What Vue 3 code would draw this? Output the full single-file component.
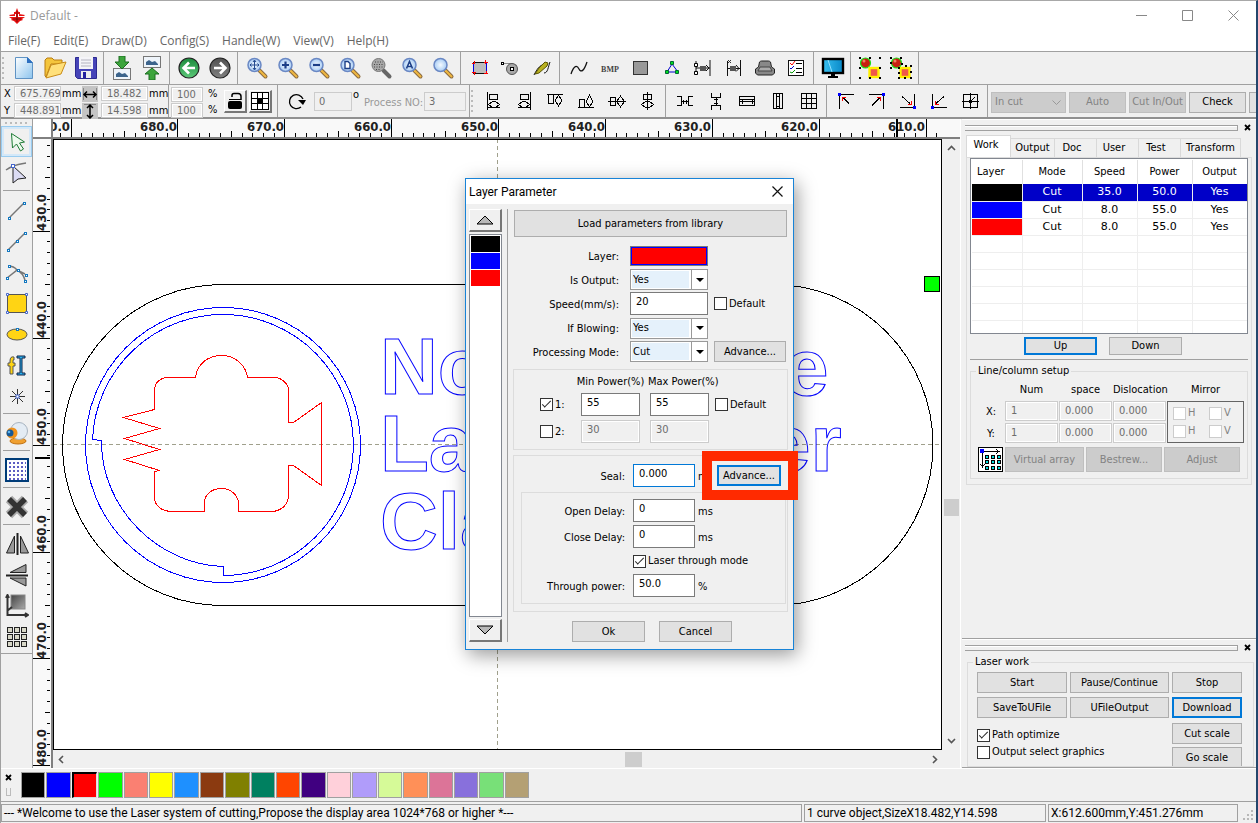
<script setup>
import { ref } from 'vue'

const menus = ['File(F)', 'Edit(E)', 'Draw(D)', 'Config(S)', 'Handle(W)', 'View(V)', 'Help(H)']

const lens = (inner) => `
  <path d="M14.5 14.5l6 6" stroke="#8a6a40" stroke-width="4" stroke-linecap="round"/>
  <path d="M14.5 14.5l6 6" stroke="#f0b840" stroke-width="2" stroke-linecap="round"/>
  <circle cx="9.5" cy="9" r="6.5" fill="url(#glass)" stroke="#6a88c4" stroke-width="1.5"/>${inner}`

const disc = (fill, arrow) => `
  <circle cx="12" cy="12" r="10" fill="url(#${fill})" stroke="#222" stroke-width="1.2"/>
  <path d="${arrow}" stroke="#fff" stroke-width="2.6" fill="none"/>`

const photo = (y) => `
  <rect x="3.5" y="${y + 0.5}" width="17" height="11" fill="#eef4fa" stroke="#777"/>
  <path d="M6 ${y + 9}v-3l3-2 3 2 3-1 3 3v1z" fill="#3c648c"/>`

const shapesPair = (dots) => `
  <path d="M11 11h10v11H11z" fill="#ccc"/>
  <circle cx="7.5" cy="7" r="5" fill="#c81e10" stroke="#18e018" stroke-width="1.2"/>
  <circle cx="6" cy="5" r="1.5" fill="#f08060"/>
  <rect x="11.5" y="12" width="9" height="9" fill="#f05848" stroke="#fff000" stroke-width="2.4"/>
  <path d="${dots}" fill="#000"/>`

const mainTools = [
  [
    { name: 'New', art: '<path d="M3.5 1.5h12l5 5v16h-17z" fill="url(#page)" stroke="#5f93c4"/><path d="M15 1v6h6z" fill="#2c6fc0"/>' },
    { name: 'Open', art: '<path d="M2 20V4l2-2h5l2 2h8v4H8L3 21z" fill="#f4c53c" stroke="#b87c10"/><path d="M3 22L8 9l15-3-5 12z" fill="#ffe07a" stroke="#c98c18"/>' },
    { name: 'Save', art: '<path d="M1.500 1.500h21v21h-19l-2-2z" fill="#4644b8" stroke="#2c2a90"/><rect x="5" y="1" width="14" height="12" fill="#f4f4f8"/><path d="M7 4h10M7 7h10M7 10h10" stroke="#b4b4c0"/><rect x="7" y="15" width="10" height="7" fill="#eee"/><rect x="9" y="16" width="3" height="6" fill="#2220a0"/>' },
  ],
  [
    { name: 'Import', art: photo(12) + '<path d="M9 0h6v6h4l-7 7-7-7h4z" fill="#3da53c" stroke="#1c6e20"/>' },
    { name: 'Export', art: photo(0) + '<path d="M9 24h6v-6h4l-7-6-7 6h4z" fill="#3da53c" stroke="#1c6e20"/>' },
  ],
  [
    { name: 'Undo', art: disc('green', 'M18 12H7M12 6.500L6.500 12l5.500 5.500') },
    { name: 'Redo', art: disc('grey', 'M6 12h11M12 6.500l5.500 5.500-5.500 5.500') },
  ],
  [
    { name: 'Move view', art: lens('<path d="M9.500 4.500v9M5 9h9M8 6l1.500-2L11 6M8 12l1.500 2 1.500-2M6.500 7.500L5 9l1.500 1.500M12.500 7.500L14 9l-1.500 1.500" stroke="#224a90" fill="none"/>') },
    { name: 'Zoom in', art: lens('<path d="M9.500 5.500v7M6 9h7" stroke="#1c3f88" stroke-width="2.200"/>') },
    { name: 'Zoom out', art: lens('<path d="M6 9h7" stroke="#1c3f88" stroke-width="2.200"/>') },
    { name: 'Page view', art: lens('<path d="M7 5.500h3l2 2v5H7z" stroke="#1c3f88" fill="#fff" stroke-width="1.400"/>') },
    { name: 'Data view', art: '<path d="M14.500 14.500l6 6" stroke="#666" stroke-width="4" stroke-linecap="round"/><circle cx="9.500" cy="9" r="6.500" fill="#a8a8a8" stroke="#777"/><path d="M6 6h8M5 8.500h9M5 11h9M7 13.500h5" stroke="#444" stroke-dasharray="1 1.500"/>' },
    { name: 'Select view', art: lens('<path d="M6.500 12.500l3-7 3 7M7.500 10.500h4" stroke="#1c3f88" stroke-width="1.600" fill="none"/>') },
    { name: 'Zoom area', art: lens('') },
  ],
  [
    { name: 'Frame', art: '<rect x="5.500" y="6.500" width="13" height="11" fill="#bdbdbd" stroke="#0000e0"/><path d="M5 6.500h14M5 17.500h14" stroke="#111"/><path d="M4 7.500h3M6.500 5v3M16 6.500h4M17.500 4v4M4 16.500h4M6.500 16v3M16 17.500h4M18.500 15v3" stroke="#f00"/>' },
    { name: 'Camera tool', art: '<path d="M4 7.500h8l6 2" stroke="#888"/><rect x="2.500" y="6.500" width="2" height="2" fill="#fff" stroke="#000"/><circle cx="13" cy="13" r="5.500" fill="#a8a8a8" stroke="#555"/><rect x="11.500" y="11.500" width="3" height="3" fill="#fff" stroke="#000"/>' },
    { name: 'Pen', art: '<path d="M4 19c3-6 6-10 9-10M14 17c4 0 4-6 6-11" stroke="#111" fill="none"/><path d="M5 18L9 12l6-6 3 1-1 3-8 7z" fill="#b8b020" stroke="#5a5400"/>' },
  ],
  [
    { name: 'Smooth curve', art: '<path d="M4 18c3-9 6-9 8-5s5 2 8-7" stroke="#111" fill="none" stroke-width="1.300"/>' },
    { name: 'Bitmap', art: '<text x="12" y="16" text-anchor="middle" font-family="Liberation Serif, serif" font-size="8" font-weight="700" fill="#444">BMP</text>' },
    { name: 'Fill', art: '<rect x="4.500" y="5.500" width="14" height="13" fill="#999" stroke="#333"/>' },
    { name: 'Nodes', art: '<path d="M12 8l-5 8h11z" stroke="#0000d0" fill="none"/><path d="M10.500 5.500h3v3h-3zM5.500 14.500h3v3h-3zM15.500 14.500h3v3h-3z" fill="#00e020" stroke="#063"/>' },
    { name: 'Set gap', art: '<path d="M5 5v14M19 4v16M5 12h14" stroke="#111"/><rect x="9" y="10" width="6" height="5" fill="#555"/><path d="M3.500 7.500h3v3h-3zM3.500 15.500h3v3h-3z" fill="#fff" stroke="#000"/><path d="M15 9l3 3-3 3" stroke="#111" fill="none"/>' },
    { name: 'Offset', art: '<path d="M5.500 5v15M18.500 4v16M6 12.500h12" stroke="#111"/><rect x="8" y="10" width="6" height="5" fill="#555"/><path d="M14 9l3 3.500-3 3" stroke="#111" fill="none"/><path d="M6 4l3 3M9 4L6 7" stroke="#333"/>' },
    { name: 'Preview', art: '<path d="M2.500 13l3-2 1-5q1-1 2-1h7q1 0 2 1l1 5 3 2v4l-2 2h-15l-2-2z" fill="#888" stroke="#222"/><path d="M7 11h10l2 4H5z" fill="#aaa" stroke="#444"/>' },
    { name: 'Layer list', art: '<rect x="4.500" y="4.500" width="15" height="15" fill="#fff" stroke="#111"/><path d="M12 7.500h6M12 12.500h6M12 16.500h6" stroke="#000"/><path d="M6 7l2 2 3-4" stroke="#f00" fill="none"/><path d="M6 12l1 1 3-3" stroke="#00c" fill="none"/><path d="M6 16l2 1 3-3" stroke="#090" fill="none"/>' },
  ],
  [
    { name: 'Monitor', art: '<rect x="2" y="3" width="20" height="14" fill="url(#screen)" stroke="#000" stroke-width="2.400"/><path d="M10 18h4v2h3v2H7v-2h3z" fill="#000"/><path d="M7 4l4 12" stroke="#8fe0ff"/>' },
  ],
  [
    { name: 'Group', art: shapesPair('M1 1h2v2H1zM11 1h2v2h-2zM21 1h2v2h-2zM1 11h2v2H1zM1 21h2v2H1zM11 21h2v2h-2zM21 21h2v2h-2zM21 11h2v2h-2z') },
    { name: 'Ungroup', art: shapesPair('M1 1h2v2H1zM11 1h2v2h-2zM1 6h2v2H1zM12 7h2v2h-2zM1 11h2v2H1zM9 11h2v2H9zM16 9h2v2h-2zM21 9h2v2h-2zM9 16h2v2H9zM21 15h2v2h-2zM9 21h2v2H9zM15 21h2v2h-2zM21 21h2v2h-2z') },
  ],
]

const line = (d) => `<path d="${d}" stroke="#000" fill="none"/>`
const corner = (sides, diag, head, x, y) => `
  <path d="${sides}M${diag}" stroke="#000" fill="none"/>
  <path d="${head}" stroke="#f00" fill="none" stroke-width="1.5"/>
  <rect x="${x}" y="${y}" width="3" height="3" fill="#00f"/>`

const alignTools = [
  [
    { name: 'Align left', art: line('M6.500 3v18M8.500 5.500h8v5h-8zM7.500 15.500l4-3h3l4 3-4 3h-3zM7 18.500h12') },
    { name: 'Align right', art: line('M18.500 3v18M8.500 5.500h8v5h-8zM6.500 15.500l4-3h3l4 3-4 3h-3zM6 18.500h12') },
    { name: 'Align top', art: line('M4 5.500h16M5.500 6v8h5V6M15.500 6l-3 5v1l3 5 3-5v-1z') },
    { name: 'Align bottom', art: line('M4 18.500h16M5.500 18v-8h5v8M15.500 18l-3-5v-1l3-6 3 6v1z') },
    { name: 'Centre vertical', art: line('M3 12.500h18M5.500 8.500h5v8h-5zM15.500 7l-4 5.500 4 5.500 4-5.500z') },
    { name: 'Centre horizontal', art: line('M11.500 3v18M7.500 5.500h8v5h-8zM5.500 15.500l4-3h4l4 3-4 3h-4z') },
  ],
  [
    { name: 'Space across', art: line('M4 7.500h4.500v9H4M20 7.500h-4.500v9H20M9 12.500h6M10.500 10.500v4M13.500 10.500v4') },
    { name: 'Space down', art: line('M7.500 4v4.500h9V4M7.500 21v-4.500h9V21M12 9v7M10 10.500h4M10 14.500h4') },
    { name: 'Same width', art: line('M4.500 7.500h15v9h-15zM5 12.500h14M7 10.500v4M17 10.500v4M5 10.500h14') },
    { name: 'Same height', art: line('M7.500 4.500h9v15h-9zM10.500 5v14M13.500 5v14M10 7.500h4M10 17.500h4') },
    { name: 'Same size', art: line('M4.500 4.500h15v15h-15zM5 9.500h14M5 14.500h14M9.500 5v14M14.500 5v14') },
  ],
  [
    { name: 'To top left', art: corner('M20 5.500H5.500V20', '15 14.500L9 8.500', 'M8.500 12V8.500H12', 4, 4) },
    { name: 'To top right', art: corner('M4 5.500h14.500V20', '7 16.500l8-8', 'M12 8.500h3.500V12', 17, 4) },
    { name: 'To bottom right', art: corner('M18.500 5v13.500H4', '6 7.500l8 7', 'M15.500 11.500V15.500H12', 17, 17) },
    { name: 'To bottom left', art: corner('M5.500 5v13.500H20', '17 7.500l-8 7', 'M8.500 11.500V15.500H12', 4, 17) },
    { name: 'To centre', art: line('M5.500 5.500h14v13h-14zM4 12.500h17M12.500 4v16') + '<path d="M11 11h3v3h-3z" fill="#000"/><path d="M13 12l4-4" stroke="#000"/>' },
  ],
]

const handle = (x, y) => `<rect x="${x}" y="${y}" width="2" height="2" fill="#fff" stroke="#1478c0"/>`
const cell = (x, y) => `<rect x="${x}" y="${y}" width="5" height="5" fill="#d8d8c8" stroke="#222"/>`
const drawTools = [
  [
    { name: 'Select', on: true, art: '<path d="M6.500 3.500l13 8.500-5 1 4 6-3 2-4-7-4 4z" fill="#eefaee" stroke="#1c7a34"/>' },
    { name: 'Edit node', art: '<path d="M1 9c8-6 14-6 20-7" stroke="#777" fill="none" stroke-width="1.500"/><path d="M8 5v17l5-4 8-1z" fill="#dcdcf4" stroke="#222"/><rect x="6.500" y="3.500" width="3" height="3" fill="#fff" stroke="#46c"/>' },
  ],
  [
    { name: 'Line', art: '<path d="M4 20L19 5" stroke="#777" stroke-width="1.500"/>' + handle(3.5, 19.5) + handle(18.5, 4.5) },
    { name: 'Polyline', art: '<path d="M3 21L20 4" stroke="#777" stroke-width="1.500"/>' + handle(2.5, 20.5) + handle(11.5, 11.5) + handle(19.5, 3.5) },
    { name: 'Curve', art: '<path d="M2 18L12 10Q9 6 3 6M12 10q6 3 8 10M12 10l8 4" stroke="#777" fill="none" stroke-width="1.500"/>' + handle(1.5, 17.5) + handle(3.5, 5.5) + handle(12.5, 9.5) + handle(20.5, 14.5) + handle(19.5, 20.5) },
    { name: 'Rectangle', art: '<rect x="2.500" y="3.500" width="19" height="18" fill="#ffd414" stroke="#555"/><path d="M1.500 2.500h2v2h-2zM20.500 2.500h2v2h-2zM1.500 20.500h2v2h-2zM20.500 20.500h2v2h-2z" fill="#fff" stroke="#46c"/>' },
    { name: 'Ellipse', art: '<ellipse cx="12" cy="12.500" rx="10" ry="5.500" fill="#ffd414" stroke="#555"/>' + handle(11.5, 6.5) },
    { name: 'Text', art: '<path d="M9 4q-4-1-4 4v2H3v3h2v8h3v-8h2v-3H8V8q0-2 1-1z" fill="#ffd414" stroke="#555"/><path d="M12 3h8v2h-3v15h3v2h-8v-2h3V5h-3z" fill="#28b0f0" stroke="#124"/>' },
    { name: 'Point', art: '<path d="M12.500 5v15M5 12.500h15M7 7l11 11M18 7L7 18" stroke="#333"/><rect x="11" y="11" width="3" height="3" fill="#fff" stroke="#46c"/>' },
  ],
  [
    { name: 'Webcam', art: '<ellipse cx="13" cy="20" rx="8" ry="3" fill="#f0a030" stroke="#c07010"/><circle cx="14" cy="10" r="8.500" fill="#e4ecf4" stroke="#a8b4c0"/><circle cx="7" cy="12" r="5.500" fill="#f0921c"/><circle cx="5" cy="12" r="3.500" fill="#145898"/><circle cx="4" cy="11" r="1.300" fill="#60b4ec"/>' },
  ],
  [
    { name: 'Grid', art: '<rect x="1" y="1" width="22" height="22" fill="#fff" stroke="#003c78" stroke-width="2"/><path d="M4 5h17M4 9h17M4 13h17M4 17h17M4 21h17" stroke="#2828b0" stroke-width="1.500" stroke-dasharray="2 2"/>' },
  ],
  [
    { name: 'Delete', art: '<path d="M4 4l16 16M20 4L4 20" stroke="#aaa" stroke-width="9"/><path d="M4 4l16 16M20 4L4 20" stroke="#333" stroke-width="5.500"/>' },
  ],
  [
    { name: 'Mirror across', art: '<path d="M9.500 4v17h-8zM15.500 4v17h8z" fill="#999" stroke="#222"/><path d="M12.500 1v22" stroke="#222" stroke-width="2"/>' },
    { name: 'Mirror down', art: '<path d="M21 1.500v8H5zM21 23v-8H5z" fill="#999" stroke="#222"/><path d="M1 12.500h22" stroke="#222" stroke-width="2"/>' },
    { name: 'Origin', art: '<rect x="6" y="1" width="14" height="14" fill="url(#dark)" stroke="#888"/><path d="M2.500 2v19H23M2 17l5-4M20 19l3 2-3 2M1 4l1.500-3L4 4" stroke="#333" fill="none" stroke-width="2"/>' },
    { name: 'Array', art: [2, 9, 16].map((y) => [2, 9, 16].map((x) => cell(x + 0.5, y + 0.5)).join('')).join('') },
  ],
]

const hMinor = Array.from({ length: 86 }, (_, i) => ({ at: Math.round(17.5 + (i - 1) * 10.69), kind: (i - 1) % 10 === 0 ? 'major' : (i - 1) % 5 === 0 ? 'mid' : 'minor' }))
const vMinor = Array.from({ length: 60 }, (_, i) => ({ at: Math.round(91.8 + (i - 8) * 10.69), kind: (i - 8) % 10 === 0 ? 'major' : (i - 8) % 5 === 0 ? 'mid' : 'minor' }))
const hLabels = Array.from({ length: 9 }, (_, i) => ({ x: Math.round(17 + i * 106.9), text: (690 - i * 10).toFixed(1) }))
const vLabels = Array.from({ length: 6 }, (_, i) => ({ y: Math.round(92 + i * 106.9), text: (430 + i * 10).toFixed(1) }))
const tick = { major: 18, mid: 6, minor: 4 }

const tabs = ['Work', 'Output', 'Doc', 'User', 'Test', 'Transform']
const layers = [
  { color: '#000000', mode: 'Cut', speed: '35.0', power: '50.0', output: 'Yes', on: true },
  { color: '#0000ff', mode: 'Cut', speed: '8.0', power: '55.0', output: 'Yes' },
  { color: '#ff0000', mode: 'Cut', speed: '8.0', power: '55.0', output: 'Yes' },
]
const palette = ['#000000', '#0000ff', '#ff0000', '#00ff00', '#fa8072', '#ffff00', '#1e90ff', '#8b3a10', '#808000', '#008060', '#ff4500', '#400080', '#ffd0da', '#b09cfa', '#d6fa98', '#ff9058', '#dc7498', '#8870dc', '#78e078', '#b4a074']
const current = ref(2)
</script>

<template>
  <div class="app">
    <svg class="defs" width="0" height="0" aria-hidden="true">
      <defs>
        <radialGradient id="glass"><stop offset="0" stop-color="#f4faff" /><stop offset="1" stop-color="#a8ccf4" /></radialGradient>
        <linearGradient id="page" x1="0" y1="0" x2="1" y2="1"><stop offset="0" stop-color="#fff" /><stop offset="1" stop-color="#8cc4ee" /></linearGradient>
        <linearGradient id="green" x1="0" y1="0" x2="0" y2="1"><stop offset="0" stop-color="#1c8a3c" /><stop offset="1" stop-color="#5cc878" /></linearGradient>
        <linearGradient id="grey" x1="0" y1="0" x2="0" y2="1"><stop offset="0" stop-color="#505050" /><stop offset="1" stop-color="#808080" /></linearGradient>
        <linearGradient id="dark" x1="0" y1="0" x2="1" y2="1"><stop offset="0" stop-color="#444" /><stop offset="1" stop-color="#aaa" /></linearGradient>
        <linearGradient id="screen" x1="0" y1="0" x2="1" y2="0"><stop offset="0" stop-color="#38c0f0" /><stop offset="1" stop-color="#0888c8" /></linearGradient>
      </defs>
    </svg>

    <header class="titlebar">
      <svg width="16" height="16" viewBox="0 0 16 16"><path d="M8 0l1.500 4H11v2H9v3h7l-3 2 1 1-3 1-1 1-2 2-2-2-1-1-3-1 1-1-3-2h7V6H5V4h1.500zM0 7l6-1v2H1zM16 7l-6-1v2h5z" fill="#e81010" /><path d="M8 3v11M4 11h8" stroke="#500" stroke-width=".7" /></svg>
      <span class="doc">Default -</span>
      <button class="win" aria-label="Minimize"><svg width="11" height="11"><path d="M0 5.500h11" stroke="#888" /></svg></button>
      <button class="win" aria-label="Maximize"><svg width="11" height="11"><path d="M.5.5h10v10H.5z" stroke="#888" fill="none" /></svg></button>
      <button class="win" aria-label="Close"><svg width="11" height="11"><path d="M.5.5l10 10M10.500.5l-10 10" stroke="#888" /></svg></button>
    </header>
    <nav class="menu"><a v-for="m in menus" :key="m" href="#">{{ m }}</a></nav>

    <div class="bar main">
      <span class="grip"></span>
      <div v-for="(g, i) in mainTools" :key="i" class="group" :class="{ tight: i === 1 }">
        <button v-for="t in g" :key="t.name" class="tool" :aria-label="t.name"><svg width="24" height="24" fill="none" v-html="t.art"></svg></button>
      </div>
    </div>

    <div class="bar second">
      <div class="coords">
        <label for="px">X</label><input id="px" value="675.769"><span>mm</span>
        <svg width="16" height="16"><path d="M1.500 2v12M14.500 2v12" stroke="#888" /><path d="M2 8.500h12M5 5.500l-3 3 3 3M11 5.500l3 3-3 3" stroke="#000" stroke-width="1.500" fill="none" /></svg>
        <input aria-label="Width" value="18.482"><span>mm</span>
        <label for="py">Y</label><input id="py" value="448.891"><span>mm</span>
        <svg width="16" height="16"><path d="M2 1.500h12" stroke="#888" /><path d="M8 2v13M5 5l3-3 3 3M5 12l3 3 3-3" stroke="#000" stroke-width="1.500" fill="none" /></svg>
        <input aria-label="Height" value="14.598"><span>mm</span>
      </div>
      <div class="scale">
        <input aria-label="Scale X" value="100"><span>%</span>
        <input aria-label="Scale Y" value="100"><span>%</span>
      </div>
      <div class="pair">
        <button class="raised" aria-label="Lock ratio"><svg width="20" height="20"><path d="M7 6V4.500q0-2 2-2h4q3 0 3 3V9" stroke="#000" stroke-width="1.500" fill="none" /><rect x="3" y="10" width="14" height="8" rx="2" /><path d="M4 8.500h12" stroke="#000" /></svg></button>
        <button class="raised" aria-label="Anchor"><svg width="20" height="20" shape-rendering="crispEdges"><path d="M1.500 1.500h17v17h-17z" fill="#fff" stroke="#000" /><path d="M7.500 1v18M12.500 1v18M1 7.500h18M1 12.500h18" stroke="#000" /><rect x="8" y="8" width="4" height="4" /></svg></button>
      </div>
      <div class="rotate">
        <svg width="20" height="20"><path d="M14 16a7 7 0 1 1 2-8" stroke="#000" stroke-width="1.300" fill="none" /><path d="M11 9h8l-3 5z" /></svg>
        <input aria-label="Angle" value="0"><span class="deg">o</span>
        <label for="pno">Process NO:</label><input id="pno" class="pno" value="3">
      </div>
      <span class="grip"></span>
      <div v-for="(g, i) in alignTools" :key="i" class="group">
        <button v-for="t in g" :key="t.name" class="tool" :aria-label="t.name"><svg width="24" height="24" shape-rendering="crispEdges" fill="none" v-html="t.art"></svg></button>
      </div>
      <div class="cuts">
        <div class="off-select">
          <select aria-label="Cut kind" disabled><option>In cut</option></select>
          <svg width="9" height="6"><path d="M.5.5l4 4 4-4" stroke="#999" fill="none" /></svg>
        </div>
        <button disabled>Auto</button>
        <button disabled>Cut In/Out</button>
        <button>Check</button>
        <button aria-label="More"></button>
      </div>
    </div>

    <div class="work">
      <aside class="tools">
        <span class="grip flat"></span>
        <div v-for="(g, i) in drawTools" :key="i" class="vgroup">
          <button v-for="t in g" :key="t.name" class="tool" :class="{ on: t.on }" :aria-label="t.name"><svg width="24" height="24" fill="none" v-html="t.art"></svg></button>
        </div>
      </aside>

      <section class="board">
        <div class="cornerbox"></div>
        <svg class="ruler top" shape-rendering="crispEdges">
          <path v-for="(t, i) in hMinor" :key="i" :d="`M${t.at + 0.5} 18v-${tick[t.kind]}`" stroke="#000" />
          <text v-for="l in hLabels" :key="l.text" :x="l.x" y="12" text-anchor="end">{{ l.text }}</text>
          <path d="M844 0v18" stroke="#000" stroke-width="2" />
        </svg>
        <div class="cap"></div>
        <svg class="ruler side" shape-rendering="crispEdges">
          <path v-for="(t, i) in vMinor" :key="i" :d="`M17 ${t.at + 0.5}h-${tick[t.kind] - 1}`" stroke="#000" />
          <text v-for="l in vLabels" :key="l.text" :transform="`translate(13 ${l.y}) rotate(-90)`">{{ l.text }}</text>
          <path d="M2 319h15" stroke="#000" stroke-width="2" />
        </svg>
        <svg class="canvas" shape-rendering="crispEdges">
          <g transform="translate(-54 -140)" fill="none">
            <path d="M53 444.500h890M497.500 139v612" stroke="#a0a08c" stroke-dasharray="4 3" />
            <path d="M222.500 284.500H773a160 160.500 0 0 1 0 321H222.500a160 160.500 0 0 1 0-321z" stroke="#000" />
            <g stroke="#00f">
              <circle cx="223" cy="445" r="137.500" />
              <path d="M92.500 439.500A130.500 130.500 0 1 1 223.500 575.500V566.500C160 565 101 510 101.500 440.500z" />
              <g class="letters">
                <text x="380" y="394">No</text><text x="784" y="395">e</text>
                <text x="380" y="471">La</text><text x="766" y="471">er</text>
                <text x="380" y="549">Cla</text>
              </g>
            </g>
            <path stroke="#f00" d="M154.500 409.500V390.500C154.500 383 160 377.500 168.500 377.500H195.500C197 364 208 355.500 221.500 355.500C236 355.500 246 366 247.500 377.500H274C282 377.500 288.500 384 288.500 390.500V422.500H293.500L321.500 402.500V485.500L293.500 465.500H288.500V497.500C287 506 280 511.500 271.500 511.500H238.500V502C237 494 230 488.500 221.500 488.500C212 488.500 205 494 204.500 502V511.500H170.500C161 511 155 505 154.500 498.500V471.500L159.500 470.500L124.500 459.500L159.500 449.500L124.500 438.500L159.500 428.500L123.500 417.500Z" />
            <rect x="924.500" y="276.500" width="15" height="15" fill="#0f0" stroke="#000" />
          </g>
        </svg>
        <div class="vscroll">
          <svg width="9" height="6"><path d="M1 5l3.500-3.500L8 5" stroke="#555" stroke-width="1.600" fill="none" /></svg>
          <i></i>
          <svg width="9" height="6"><path d="M1 1l3.500 3.500L8 1" stroke="#555" stroke-width="1.600" fill="none" /></svg>
        </div>
        <div class="hscroll">
          <svg width="6" height="9"><path d="M5 1L1.500 4.500 5 8" stroke="#555" stroke-width="1.600" fill="none" /></svg>
          <i></i>
          <svg width="6" height="9"><path d="M1 1l3.500 3.500L1 8" stroke="#555" stroke-width="1.600" fill="none" /></svg>
        </div>
      </section>

      <aside class="side-panels">
        <section class="panel upper">
          <div class="handle"><span></span><button aria-label="Close panel"><svg width="7" height="7"><path d="M1 1l5 5M6 1L1 6" stroke="#000" stroke-width="1.800" /></svg></button></div>
          <div class="tabs"><button v-for="(t, i) in tabs" :key="t" :class="{ on: i === 0 }">{{ t }}</button></div>
          <div class="sheet">
            <div class="tablebox">
              <table>
                <colgroup><col class="c1"><col class="c2"><col class="c3"><col class="c4"><col class="c5"></colgroup>
                <thead><tr><th class="first">Layer</th><th>Mode</th><th>Speed</th><th>Power</th><th>Output</th></tr></thead>
                <tbody>
                  <tr v-for="l in layers" :key="l.color" :class="{ on: l.on }">
                    <td :style="{ backgroundColor: l.color }"></td><td>{{ l.mode }}</td><td>{{ l.speed }}</td><td>{{ l.power }}</td><td>{{ l.output }}</td>
                  </tr>
                  <tr v-for="n in 6" :key="n"><td v-for="k in 5" :key="k"></td></tr>
                </tbody>
              </table>
            </div>
            <div class="updown"><button class="focus">Up</button><button>Down</button></div>
            <fieldset class="array">
              <legend>Line/column setup</legend>
              <div class="arraygrid">
                <span></span><span>Num</span><span>space</span><span>Dislocation</span><span>Mirror</span>
                <b>X:</b><input aria-label="X num" value="1" disabled><input aria-label="X space" value="0.000" disabled><input aria-label="X dislocation" value="0.000" disabled>
                <div class="mirror">
                  <label><input type="checkbox" disabled>H</label><label><input type="checkbox" disabled>V</label>
                  <label><input type="checkbox" disabled>H</label><label><input type="checkbox" disabled>V</label>
                </div>
                <b>Y:</b><input aria-label="Y num" value="1" disabled><input aria-label="Y space" value="0.000" disabled><input aria-label="Y dislocation" value="0.000" disabled>
              </div>
              <div class="arraybtns">
                <button class="arricon" aria-label="Array setup">
                  <svg width="23" height="23" shape-rendering="crispEdges"><path d="M3.500 3.500H20M3.500 3v16M17 1.500l3 2-3 2M1.500 16l2 3 2-3" stroke="#000" fill="none" /><rect x="1" y="1" width="4" height="4" fill="#00f" /><path d="M6.500 7.500h3v3h-3zM12.500 7.500h3v3h-3zM18.500 7.500h3v3h-3zM6.500 12.500h3v3h-3zM12.500 12.500h3v3h-3zM18.500 12.500h3v3h-3zM6.500 18.500h3v3h-3zM12.500 18.500h3v3h-3zM18.500 18.500h3v3h-3z" fill="#0dd" stroke="#000" /></svg>
                </button>
                <button disabled>Virtual array</button><button disabled>Bestrew...</button><button disabled>Adjust</button>
              </div>
            </fieldset>
          </div>
        </section>
        <section class="panel lower">
          <div class="handle"><span></span><button aria-label="Close panel"><svg width="7" height="7"><path d="M1 1l5 5M6 1L1 6" stroke="#000" stroke-width="1.800" /></svg></button></div>
          <fieldset class="laser">
            <legend>Laser work</legend>
            <div class="lasergrid">
              <button>Start</button><button>Pause/Continue</button><button>Stop</button>
              <button>SaveToUFile</button><button>UFileOutput</button><button class="focus">Download</button>
            </div>
            <div class="laserfoot">
              <div class="opts">
                <label><input type="checkbox" checked>Path optimize</label>
                <label><input type="checkbox">Output select graphics</label>
              </div>
              <div class="scales"><button>Cut scale</button><button>Go scale</button></div>
            </div>
          </fieldset>
        </section>
      </aside>
    </div>

    <div class="palette">
      <div class="pgrip"><button aria-label="Close palette"><svg width="7" height="7"><path d="M1 1l5 5M6 1L1 6" stroke="#000" stroke-width="1.800" /></svg></button><i></i></div>
      <div class="swatches"><button v-for="(c, i) in palette" :key="c" :class="{ on: i === current }" :style="{ background: c }" :aria-label="c" @click="current = i"></button></div>
    </div>

    <footer class="status">
      <span>--- *Welcome to use the Laser system of cutting,Propose the display area 1024*768 or higher *---</span>
      <span>1 curve object,SizeX18.482,Y14.598</span>
      <span>X:612.600mm,Y:451.276mm</span>
      <svg width="12" height="12"><path d="M9 1h2v2H9zM5 5h2v2H5zM9 5h2v2H9zM1 9h2v2H1zM5 9h2v2H5zM9 9h2v2H9z" fill="#b8b8b8" /></svg>
    </footer>

    <div class="dialog" role="dialog" aria-label="Layer Parameter">
      <div class="dtitle"><span>Layer Parameter</span><button aria-label="Close"><svg width="11" height="11"><path d="M.5.5l10 10M10.500.5l-10 10" stroke="#111" stroke-width="1.200" /></svg></button></div>
      <div class="dbody">
        <div class="dleft">
          <button class="raised" aria-label="Previous layer"><svg width="18" height="10"><path d="M1 9h16L9 1z" fill="#b8b8b8" stroke="#000" /></svg></button>
          <div class="dlist"><i v-for="l in layers" :key="l.color" :style="{ background: l.color }"></i></div>
          <button class="raised" aria-label="Next layer"><svg width="18" height="10"><path d="M1 1h16L9 9z" fill="#b8b8b8" stroke="#000" /></svg></button>
        </div>
        <div class="dright">
          <button class="load">Load parameters from library</button>
          <div class="form">
            <span class="lab">Layer:</span><button class="color" aria-label="Layer colour"></button><span></span>
            <label class="lab" for="io">Is Output:</label><div class="combo"><select id="io"><option>Yes</option></select><i></i></div><span></span>
            <label class="lab" for="sp">Speed(mm/s):</label><input id="sp" value="20"><label class="chk"><input type="checkbox">Default</label>
            <label class="lab" for="bl">If Blowing:</label><div class="combo"><select id="bl"><option>Yes</option></select><i></i></div><span></span>
            <label class="lab" for="pm">Processing Mode:</label><div class="combo"><select id="pm"><option>Cut</option></select><i></i></div><button class="adv">Advance...</button>
          </div>
          <div class="box powers">
            <span></span><span>Min Power(%)</span><span class="maxhead">Max Power(%)</span><span></span>
            <label class="chk"><input type="checkbox" checked>1:</label><input aria-label="Min power 1" value="55"><input aria-label="Max power 1" value="55"><label class="chk"><input type="checkbox">Default</label>
            <label class="chk"><input type="checkbox">2:</label><input aria-label="Min power 2" value="30" disabled><input aria-label="Max power 2" value="30" disabled><span></span>
          </div>
          <div class="box seals">
            <div class="seal">
              <label class="lab" for="se">Seal:</label><input id="se" class="active" value="0.000"><span>mm</span>
              <div class="mark"><button class="focus">Advance...</button></div>
            </div>
            <div class="box delays">
              <label class="lab" for="od">Open Delay:</label><input id="od" value="0"><span>ms</span>
              <label class="lab" for="cd">Close Delay:</label><input id="cd" value="0"><span>ms</span>
              <span></span><label class="chk wide"><input type="checkbox" checked>Laser through mode</label>
              <label class="lab" for="tp">Through power:</label><input id="tp" value="50.0"><span>%</span>
            </div>
          </div>
          <div class="okrow"><button>Ok</button><button>Cancel</button></div>
        </div>
      </div>
    </div>
  </div>
</template>

<style>
body { margin: 0; background: #f0f0f0; }
</style>

<style scoped>
.app {
  --ui: "DejaVu Sans Condensed", "Noto Sans", sans-serif;
  --seg: "Open Sans", "Noto Sans", sans-serif;
  --bar: Roboto, "Open Sans", sans-serif;
  position: relative; display: flex; flex-direction: column; min-height: 100vh; box-sizing: border-box;
  border-left: 1px solid #a0a0a0; border-right: 2px solid #24466c; border-top: 1px solid #a8a8a8;
  background: #f0f0f0; color: #000; font: 11px/14px var(--ui); overflow: hidden;
}
.app *, .app *::before, .app *::after { box-sizing: border-box; }
.defs { position: absolute; }
button, input, select { font: inherit; color: inherit; margin: 0; padding: 0; min-width: 0; border-radius: 0; }
button { background: #e1e1e1; border: 1px solid #adadad; text-align: center; white-space: nowrap; }
button:disabled { background: #ccc; border-color: #bfbfbf; color: #838383; }
button.focus { border: 2px solid #0078d7; }
svg { flex: none; display: block; }
input { background: #fff; border: 1px solid #7a7a7a; padding: 0 4px 4px 5px; outline: 0; height: 23px; }
input:disabled { background: #f0f0f0; border: 1px solid #ccc; color: #6d6d6d; box-shadow: inset 0 0 0 1px #fff; }
input[type=checkbox] { appearance: none; width: 13px; height: 13px; padding: 0; border: 1px solid #333; flex: none; background: #fff; display: grid; place-items: center; }
input[type=checkbox]:disabled { border-color: #ccc; box-shadow: none; background: #fff; }
input[type=checkbox]:checked::before { content: ""; width: 9px; height: 4px; border-left: 1px solid #222; border-bottom: 1px solid #222; transform: rotate(-45deg); margin-bottom: 3px; }
label { white-space: nowrap; }

.titlebar { display: flex; align-items: center; height: 29px; background: #fff; padding-left: 8px; font: 12px/16px var(--seg); color: #999; }
.doc { flex: 1; margin-left: 5px; }
.win { display: grid; place-items: center; width: 46px; height: 28px; border: 0; background: #fff; }
.menu { display: flex; gap: 13px; height: 21px; padding-left: 7px; background: #fff; font: 12px/22px var(--seg); }
.menu a { color: #666; text-decoration: none; }

.bar { display: flex; align-items: center; border-top: 1px solid #a0a0a0; }
.bar.main { height: 33px; }
.bar.second { height: 35px; border-bottom: 2px solid #909090; }
.grip { display: block; width: 4px; height: 22px; margin: 0 2px 0 1px; background: repeating-linear-gradient(#bbb 0 2px, transparent 2px 5px) left / 2px 100% no-repeat; }
.grip.flat { width: 24px; height: 2px; margin: 3px 0 2px 4px; background: repeating-linear-gradient(90deg, #bbb 0 2px, transparent 2px 5px); }
.group { display: flex; align-items: center; height: 100%; padding-right: 2px; margin-right: 3px; border-right: 1px solid #a0a0a0; }
.tool { display: grid; place-items: center; width: 31px; height: 31px; border: 0; background: none; }
.tight .tool { width: 30px; }

.coords { display: grid; grid-template-columns: 10px 47px 21px 19px 47px 20px; row-gap: 1px; align-items: center; height: 100%; padding: 2px 0 0 3px; align-content: center; border-right: 1px solid #a0a0a0; }
.coords svg { background: #c4c4c4; }
.coords span, .scale span { padding-left: 1px; }
.coords input, .scale input { height: 15px; padding: 0 0 0 5px; background: #f0f0f0; border-color: #ccc; color: #6d6d6d; box-shadow: inset 0 0 0 1px #fff; }
.scale { display: grid; grid-template-columns: 32px 17px; column-gap: 4px; row-gap: 1px; align-content: center; height: 100%; padding: 2px 0 0 2px; }
.pair { display: flex; gap: 2px; align-items: center; height: 100%; padding-right: 5px; border-right: 1px solid #a0a0a0; }
.raised { display: grid; place-items: center; width: 23px; height: 23px; background: #f0f0f0; border: 1px solid #fff; border-right: 2px solid #777; border-bottom: 2px solid #777; }
.rotate { display: flex; align-items: center; height: 100%; padding: 0 3px 0 9px; border-right: 1px solid #a0a0a0; color: #999; }
.rotate input { width: 38px; height: 19px; margin-left: 7px; padding: 0 4px; background: #f0f0f0; border-color: #ccc; color: #6d6d6d; }
.rotate .deg { color: #000; padding: 0 5px 12px 1px; }
.rotate label { padding-top: 4px; }
.rotate .pno { width: 42px; margin-left: 1px; }
.cuts { display: flex; gap: 3px; flex: 1; min-width: 0; padding-top: 2px; overflow: hidden; }
.cuts button { width: 57px; height: 21px; flex: none; }
.off-select { position: relative; width: 75px; flex: none; }
.off-select select { appearance: none; width: 100%; height: 21px; padding-left: 3px; background: #ccc; border: 1px solid #bfbfbf; color: #838383; opacity: 1; }
.off-select svg { position: absolute; right: 5px; top: 8px; pointer-events: none; }

.work { display: flex; flex: 1; min-height: 0; }
.tools { width: 32px; flex: none; border-right: 1px solid #a0a0a0; }
.vgroup { position: relative; padding-bottom: 6px; }
.vgroup::after { content: ""; position: absolute; left: 2px; right: 2px; bottom: 3px; height: 1px; background: #a0a0a0; }
.vgroup:last-child { padding-bottom: 1px; border-bottom: 1px solid #a0a0a0; }
.vgroup:last-child::after { display: none; }
.tool.on { background: #f0f0f0; border: 1px solid #99ccf0; box-shadow: inset 0 0 0 2px #d4e8f8; }

.board { display: grid; flex: 1; min-width: 0; grid-template-columns: 20px 1fr 18px; grid-template-rows: 20px 1fr 18px; background: #f0f0f0; }
.cornerbox { background: #fff; border-right: 2px solid #808080; border-bottom: 2px solid #808080; }
.ruler { background: #f9f9f9; width: 100%; height: 100%; font: 700 13px "DejaVu Sans Condensed", "Noto Sans", sans-serif; fill: #222; overflow: hidden; }
.ruler.top { border-bottom: 2px solid #808080; }
.ruler.side { border-right: 2px solid #808080; grid-row: 2 / 4; grid-column: 1; }
.cap { background: #f9f9f9; border-bottom: 2px solid #808080; }
.canvas { width: 100%; height: 100%; background: #fff; border: 1px solid #000; grid-row: 2; grid-column: 2; }
.letters { font: 700 80px "Liberation Sans", sans-serif; }
.vscroll { display: flex; flex-direction: column; align-items: center; justify-content: space-between; padding: 6px 0; grid-row: 2; grid-column: 3; }
.vscroll i { width: 15px; height: 17px; background: #cdcdcd; margin-top: 126px; }
.hscroll { display: flex; align-items: center; justify-content: space-between; padding: 0 4px 0 5px; grid-row: 3; grid-column: 2; }
.hscroll i { width: 17px; height: 15px; background: #cdcdcd; margin-left: 270px; }

.side-panels { display: flex; flex-direction: column; width: 296px; flex: none; border-left: 1px solid #fff; padding-left: 1px; }
.panel { border-top: 1px solid #fff; border-bottom: 1px solid #a0a0a0; }
.panel.upper { flex: 1; min-height: 0; }
.panel.lower { height: 129px; overflow: hidden; }
.handle { display: flex; align-items: center; gap: 6px; padding: 4px 5px 0 3px; }
.handle span { flex: 1; height: 6px; border: 1px solid #a0a0a0; border-left: 0; background: linear-gradient(#fff 0 1px, #f0f0f0 1px); }
.handle button, .pgrip button { border: 0; background: none; width: 7px; height: 7px; display: block; }
.tabs { display: flex; align-items: flex-end; padding: 4px 0 0 4px; height: 26px; }
.tabs button { height: 19px; flex: none; width: 42px; border: 1px solid #d9d9d9; border-left: 0; background: #f0f0f0; border-bottom: 0; padding-right: 7px; }
.tabs button:nth-child(2) { width: 44px; padding: 0; }
.tabs button:last-child { width: 60px; padding: 0; }
.tabs button.on { width: 45px; height: 22px; background: #fff; border: 1px solid #d9d9d9; border-bottom: 0; padding: 0 5px 4px 0; }
.sheet { margin: 0 4px; border: 1px solid #dcdcdc; padding: 0 3px 5px; }
.tablebox { height: 176px; border: 1px solid #828790; background: #fff; overflow: hidden; padding: 1px; }
table { width: 100%; border-collapse: collapse; table-layout: fixed; font: 11px/16px "DejaVu Sans", sans-serif; }
.c1 { width: 50px; } .c2 { width: 60px; } .c3, .c4, .c5 { width: 55px; }
th { height: 24px; padding: 0; font: 11px/14px var(--ui); border-right: 1px solid #e0e0e0; }
th.first { text-align: left; padding-left: 5px; }
td { height: 17px; padding: 0; text-align: center; border-right: 1px solid #eee; border-bottom: 1px solid #eee; background-clip: padding-box; }
tr.on td { background-color: #0000c8; color: #fff; }
.updown { display: flex; justify-content: center; gap: 12px; padding: 3px 12px 4px 0; margin-bottom: 4px; border-bottom: 1px solid #a0a0a0; }
.updown button { width: 73px; height: 18px; }
fieldset { margin: 0; padding: 0; border: 1px solid #dcdcdc; min-width: 0; }
legend { padding: 0 2px; line-height: 14px; }
.array { height: 115px; padding: 5px 3px 0 7px; }
.array legend { margin-left: -2px; }
.laser legend { margin-left: -4px; }
.arraygrid { display: grid; grid-template-columns: 26px 53px 53px 53px 1fr; grid-template-rows: 16px 20px 20px; column-gap: 1px; row-gap: 2px; text-align: center; }
.arraygrid > input { height: 20px; width: 100%; padding: 0 5px 1px; }
.arraygrid b { font-weight: 400; padding-top: 4px; }
.mirror { grid-row: 2 / 4; grid-column: 5; border: 1px solid #646464; display: grid; grid-template-columns: 36px 30px; align-content: space-evenly; padding-left: 5px; color: #838383; }
.mirror label, .chk, .opts label { display: flex; align-items: center; gap: 2px; }
.arraybtns { display: grid; grid-template-columns: 25px 79px 76px 76px; gap: 2px; height: 24px; margin-top: 4px; }
.arricon { background: #fff; border: 1px solid #000; }
.laser { margin: 4px 2px 0 5px; padding: 3px 8px 0 9px; }
.lasergrid { display: grid; grid-template-columns: 90px 99px 70px; gap: 4px 3px; grid-auto-rows: 21px; }
.laserfoot { display: flex; justify-content: space-between; padding: 5px 3px 0 0; height: 48px; overflow: hidden; }
.opts { display: grid; gap: 3px; padding-top: 5px; align-content: start; }
.scales { display: grid; gap: 3px; width: 70px; grid-auto-rows: 21px; }

.palette { display: flex; gap: 9px; padding: 3px 0 5px 4px; height: 34px; border-top: 1px solid #fff; border-bottom: 1px solid #a0a0a0; }
.pgrip { width: 7px; padding-top: 2px; }
.pgrip i { display: block; margin: 7px 0 0 1px; width: 5px; height: 8px; border: 1px solid #bbb; border-top: 0; }
.swatches { display: flex; gap: 1px; width: 508px; }
.swatches button { flex: 1; height: 26px; border: 1px solid #a0a0a0; }
.swatches button.on { border: 1px solid #ddd; border-top: 2px solid #000; border-left: 2px solid #000; }
.status { display: flex; gap: 2px; height: 21px; padding: 2px 2px 1px 0; font: 12px/17px var(--bar); }
.status span { border: 1px solid #a0a0a0; width: 190px; padding-left: 2px; white-space: nowrap; }
.status span:first-child { flex: 1; }
.status span:nth-child(2) { width: 242px; }
.status svg { margin: 5px 0 0 2px; }

.dialog { position: absolute; left: 464px; top: 177px; width: 329px; background: #f0f0f0; border: 1px solid #1883d7; box-shadow: 3px 5px 18px rgba(0, 0, 0, .4); }
.dtitle { display: flex; justify-content: space-between; align-items: center; height: 25px; background: #fff; padding: 0 10px 0 3px; font: 12px/16px var(--bar); }
.dtitle button { border: 0; background: none; }
.dbody { display: flex; padding: 5px 5px 7px 3px; }
.dleft { display: flex; flex-direction: column; gap: 2px; width: 39px; padding-right: 6px; border-right: 1px solid #a0a0a0; }
.dleft .raised { width: 33px; height: 23px; }
.dlist { flex: 1; width: 33px; border: 1px solid #828790; background: #fff; padding: 1px; }
.dlist i { display: block; height: 16px; margin-bottom: 1px; }
.dright { flex: 1; padding: 1px 0 0 5px; min-width: 0; }
.load { display: block; width: 273px; height: 27px; margin: 0 0 8px 1px; }
.form { display: grid; grid-template-columns: 106px 78px 72px; grid-template-rows: 22px 21px 23px 22px 21px; row-gap: 2px; align-items: center; margin-bottom: 7px; }
.form > :nth-child(3n+2) { width: 78px; margin-left: 11px; }
.form > :nth-child(3n) { margin-left: 17px; }
.form .adv { width: 72px; height: 21px; }
.lab { text-align: right; padding-top: 2px; }
.color { height: 20px; background: #f00; border: 1px solid #7a7a7a; box-shadow: inset 0 0 0 1px #00f; }
.combo { display: flex; position: relative; height: 21px; background: #fff; border: 1px solid #999; }
.combo select { appearance: none; flex: 1; margin: 1px 18px 1px 1px; padding-left: 1px; border: 0; background: #e5f1fb; }
.combo i { position: absolute; right: 0; top: 0; bottom: 0; width: 16px; border-left: 1px solid #999; pointer-events: none; display: grid; place-items: center; }
.combo i::before { content: ""; border: 4px solid transparent; border-top-color: #000; border-bottom: 0; }
.box { border: 1px solid #dcdcdc; }
.powers { display: grid; grid-template-columns: 31px 59px 59px 70px; grid-template-rows: 15px 23px 23px; column-gap: 10px; row-gap: 4px; align-items: center; height: 81px; padding: 4px 0 6px 26px; margin-bottom: 5px; }
.powers > span { white-space: nowrap; justify-self: center; }
.powers > .maxhead { justify-self: start; margin-left: -2px; }
.powers > input { width: 59px; }
.powers > .chk:nth-child(8) { margin-left: -4px; }
.seals { height: 157px; padding: 8px 1px 0 8px; }
.seal { position: relative; display: grid; grid-template-columns: 103px 62px 30px; column-gap: 8px; align-items: center; height: 23px; margin-bottom: 5px; }
.seal input.active { border-color: #0078d7; }
.seal > span, .delays > span { margin-left: -5px; padding-top: 2px; }
.mark { position: absolute; left: 180px; top: -13px; width: 96px; height: 49px; padding: 4px 5px; border: 10px solid #ff2a00; background: #f0f0f0; }
.mark button { width: 64px; height: 21px; display: block; }
.delays { display: grid; grid-template-columns: 103px 62px 30px; grid-template-rows: 23px 23px 20px 23px; column-gap: 8px; row-gap: 3px; align-items: center; padding: 6px 0; height: 112px; margin-left: -1px; }
.chk.wide { grid-column: 2 / 4; }
.okrow { display: flex; gap: 14px; padding: 9px 0 0 59px; }
.okrow button { width: 73px; height: 21px; }
</style>
